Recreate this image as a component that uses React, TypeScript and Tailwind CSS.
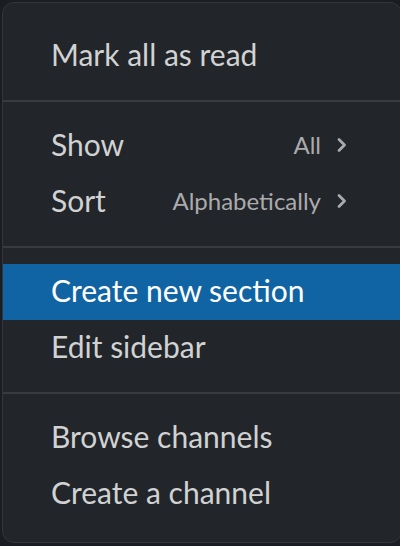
import React from 'react';

type Item = {
  label: string;
  value?: string;
  active?: boolean;
};

const groups: Item[][] = [
  [{ label: 'Mark all as read' }],
  [
    { label: 'Show', value: 'All' },
    { label: 'Sort', value: 'Alphabetically' },
  ],
  [{ label: 'Create new section', active: true }, { label: 'Edit sidebar' }],
  [{ label: 'Browse channels' }, { label: 'Create a channel' }],
];

const Chevron = () => (
  <svg width="16" height="16" viewBox="0 0 16 16" className="ml-[13px]">
    <polyline
      points="5,2.5 10.5,8 5,13.5"
      fill="none"
      stroke="#ababad"
      strokeWidth="2.8"
      strokeLinecap="round"
      strokeLinejoin="round"
    />
  </svg>
);

const MenuRow = ({ item }: { item: Item }) => (
  <div
    className={`flex h-[56px] items-center pb-[4px] pl-[48px] pr-[51px] ${
      item.active ? 'bg-[#1164a3] text-white' : 'text-[#d1d2d3]'
    }`}
  >
    <span className="flex-1 text-[30px] leading-[52px]">{item.label}</span>
    {item.value && (
      <span className="flex items-center pt-[2px] text-[24px] leading-[30px] text-[#ababad]">
        {item.value}
        <Chevron />
      </span>
    )}
  </div>
);

export default function App() {
  return (
    <div
      className="h-[546px] w-[400px] overflow-hidden bg-[#1a1d21] pl-[2px] pt-[2px]"
      style={{ fontFamily: 'Lato, "Noto Sans", sans-serif' }}
    >
      <div className="w-[400px] rounded-[12px] border border-[#34363a] bg-[#222529] pb-[20px] pt-[25px]">
        {groups.map((group, gi) => (
          <div key={gi}>
            {gi > 0 && <div className="h-[2px] bg-[#393b3f]" />}
            <div className={`${gi > 0 ? 'pt-[16px]' : ''} ${gi < groups.length - 1 ? 'pb-[16px]' : ''}`}>
              {group.map((item) => (
                <MenuRow key={item.label} item={item} />
              ))}
            </div>
          </div>
        ))}
      </div>
    </div>
  );
}
